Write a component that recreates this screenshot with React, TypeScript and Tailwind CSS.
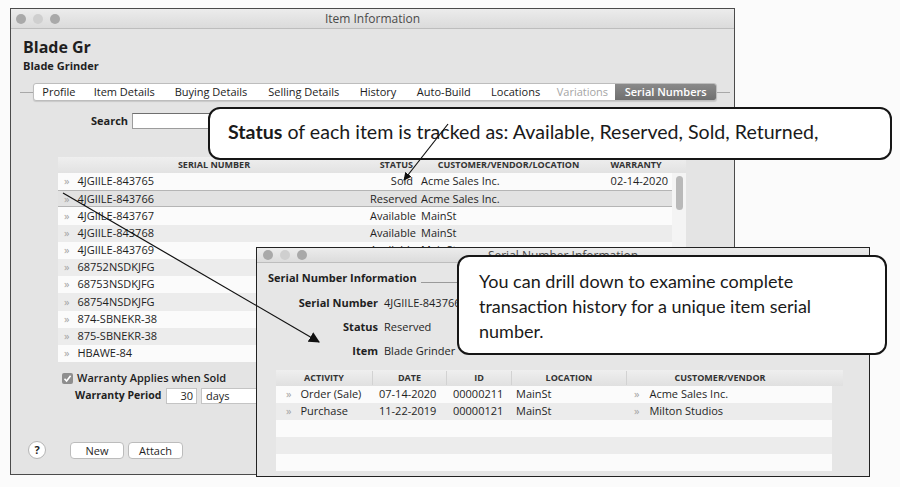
import React from "react";

// Item Information window with a Serial Number Information window on top, plus two callouts

const APP_FONT = "font-['Open_Sans','Liberation_Sans',sans-serif]";
const NOTE_FONT = "font-['Lato','Liberation_Sans',sans-serif]";

const TABS = [
  { label: "Profile", w: "w-[50px]" },
  { label: "Item Details", w: "w-[81px]" },
  { label: "Buying Details", w: "w-[93px]" },
  { label: "Selling Details", w: "w-[93px]" },
  { label: "History", w: "w-[56px]" },
  { label: "Auto-Build", w: "w-[76px]" },
  { label: "Locations", w: "w-[68px]" },
  { label: "Variations", w: "w-[66px]", disabled: true },
  { label: "Serial Numbers", w: "w-[101px]", active: true },
];

type SerialRow = { sn: string; status?: string; who?: string; warranty?: string; selected?: boolean };

const SERIALS: SerialRow[] = [
  { sn: "4JGIILE-843765", status: "Sold", who: "Acme Sales Inc.", warranty: "02-14-2020" },
  { sn: "4JGIILE-843766", status: "Reserved", who: "Acme Sales Inc.", selected: true },
  { sn: "4JGIILE-843767", status: "Available", who: "MainSt" },
  { sn: "4JGIILE-843768", status: "Available", who: "MainSt" },
  { sn: "4JGIILE-843769", status: "Available", who: "MainSt" },
  { sn: "68752NSDKJFG", status: "Available", who: "MainSt" },
  { sn: "68753NSDKJFG", status: "Available", who: "MainSt" },
  { sn: "68754NSDKJFG", status: "Available", who: "MainSt" },
  { sn: "874-SBNEKR-38", status: "Available", who: "MainSt" },
  { sn: "875-SBNEKR-38", status: "Available", who: "MainSt" },
  { sn: "HBAWE-84", status: "Available", who: "MainSt" },
];

const HISTORY = [
  { activity: "Order (Sale)", date: "07-14-2020", id: "00000211", location: "MainSt", who: "Acme Sales Inc." },
  { activity: "Purchase", date: "11-22-2019", id: "00000121", location: "MainSt", who: "Milton Studios" },
  null,
  null,
  null,
];

function Chevron() {
  return <span className="text-[#a3a3a3] text-[11px]">»</span>;
}

function Lights() {
  return (
    <div className="flex items-center gap-[7px]">
      <span className="w-[10px] h-[10px] rounded-full bg-[#a9a9a9]" />
      <span className="w-[10px] h-[10px] rounded-full bg-[#cfcfcf]" />
      <span className="w-[10px] h-[10px] rounded-full bg-[#a9a9a9]" />
    </div>
  );
}

function ItemWindow() {
  return (
    <div className={`absolute left-[10px] top-[8px] w-[725px] h-[467px] border border-[#4b4b4b] bg-[#e4e4e4] flex flex-col text-[#1f1f1f] ${APP_FONT}`}>
      {/* title bar */}
      <div className="h-[20px] shrink-0 flex items-center border-b border-[#bdbdbd] bg-gradient-to-b from-[#ececec] to-[#dbdbdb]">
        <div className="w-[70px] pl-[5px]">
          <Lights />
        </div>
        <div className="flex-1 text-center text-[12px] text-[#4a4a4a]">Item Information</div>
        <div className="w-[70px]" />
      </div>

      <div className="ml-[12px] mt-[8px] h-[20px] leading-[20px] text-[16px] font-bold">Blade Gr</div>
      <div className="ml-[12px] mt-[2px] h-[14px] leading-[14px] text-[11px] font-bold">Blade Grinder</div>

      {/* tabs */}
      <div className="mt-[10px] ml-[9px] h-[18px] flex items-center">
        <div className="w-[13px] h-px bg-[#a8a8a8]" />
        <div className="w-[684px] h-[18px] flex bg-white border border-[#bdbdbd] rounded-[3px] shadow-[0_1px_1px_rgba(0,0,0,0.12)] overflow-hidden">
          {TABS.map((t) => (
            <div
              key={t.label}
              className={`${t.w} h-full flex items-center justify-center text-[11px] ${
                t.active
                  ? "bg-gradient-to-b from-[#8a8a8a] to-[#6f6f6f] text-white font-semibold"
                  : t.disabled
                  ? "text-[#a5a5a5]"
                  : "text-[#1c1c1c]"
              }`}
            >
              {t.label}
            </div>
          ))}
        </div>
        <div className="w-[13px] h-px bg-[#a8a8a8]" />
      </div>

      {/* search */}
      <div className="mt-[12px] ml-[80px] h-[16px] flex items-center">
        <span className="w-[37px] text-[11px] font-bold">Search</span>
        <div className="ml-[4px] w-[170px] h-[16px] bg-white border border-[#9c9c9c] border-t-[#6f6f6f]" />
      </div>

      {/* serial table */}
      <div className="mt-[28px] ml-[47px] w-[628px]">
        <div className="h-[16px] grid grid-cols-[312px_47px_183px_72px_14px] items-center text-[9px] font-bold text-[#333] bg-gradient-to-b from-[#efefef] to-[#e2e2e2]">
          <span className="text-center">SERIAL NUMBER</span>
          <span className="text-right pr-[4px]">STATUS</span>
          <span className="text-center">CUSTOMER/VENDOR/LOCATION</span>
          <span className="text-center">WARRANTY</span>
          <span />
        </div>
        <div className="flex">
          <div className="w-[614px]">
            {SERIALS.map((r, i) => (
              <div
                key={r.sn}
                className={`h-[17.2px] grid grid-cols-[312px_47px_183px_72px] items-center text-[11px] ${
                  r.selected
                    ? "bg-[#e2e2e2] border-y border-[#b5b5b5]"
                    : i % 2 === 0
                    ? "bg-[#fbfbfb]"
                    : "bg-[#ececec]"
                }`}
              >
                <span className="flex items-center pl-[6px] gap-[8px]">
                  <Chevron />
                  <span>{r.sn}</span>
                </span>
                <span className="text-right pr-[4px] whitespace-nowrap">{r.status}</span>
                <span className="pl-[4px] whitespace-nowrap">{r.who}</span>
                <span className="text-right pr-[4px] whitespace-nowrap overflow-hidden">{r.warranty}</span>
              </div>
            ))}
          </div>
          <div className="w-[14px] bg-[#f4f4f4] pt-[3px] flex justify-center">
            <div className="w-[7px] h-[34px] rounded-full bg-[#b9b9b9]" />
          </div>
        </div>
      </div>

      {/* warranty */}
      <div className="mt-[9px] ml-[51px] h-[14px] flex items-center gap-[4px] text-[11px] font-semibold whitespace-nowrap">
        <span className="w-[11px] h-[11px] rounded-[2px] bg-[#8e8e8e] flex items-center justify-center">
          <svg width="9" height="9" viewBox="0 0 9 9">
            <path d="M1.5 4.8 L3.6 7 L7.6 1.8" fill="none" stroke="white" strokeWidth="1.6" />
          </svg>
        </span>
        <span>Warranty Applies when Sold</span>
      </div>
      <div className="mt-[3px] ml-[64px] h-[16px] flex items-center text-[11px]">
        <span className="w-[88px] font-bold text-[10.5px] whitespace-nowrap">Warranty Period</span>
        <div className="ml-[3px] w-[31px] h-[16px] bg-white border border-[#c4c4c4] text-right pr-[3px] leading-[14px]">30</div>
        <div className="ml-[4px] w-[80px] h-[16px] bg-white border border-[#c4c4c4] pl-[4px] leading-[14px]">days</div>
      </div>

      {/* buttons */}
      <div className="mt-[37px] ml-[17px] h-[18px] flex items-center text-[11px]">
        <span className="w-[18px] h-[18px] rounded-full bg-white border border-[#b5b5b5] flex items-center justify-center font-bold text-[11px]">?</span>
        <button className="ml-[24px] w-[54px] h-[17px] bg-white border border-[#bcbcbc] rounded-[4px]">New</button>
        <button className="ml-[4px] w-[55px] h-[17px] bg-white border border-[#bcbcbc] rounded-[4px]">Attach</button>
      </div>
    </div>
  );
}

function SerialWindow() {
  return (
    <div className={`absolute left-[256px] top-[247px] w-[614px] h-[230px] border border-[#222] bg-[#e6e6e6] flex flex-col text-[#1f1f1f] ${APP_FONT}`}>
      <div className="h-[15px] shrink-0 flex items-center border-b border-[#bdbdbd] bg-gradient-to-b from-[#ececec] to-[#dcdcdc]">
        <div className="w-[70px] pl-[6px]">
          <Lights />
        </div>
        <div className="flex-1 text-center text-[12px] text-[#4a4a4a] leading-[14px] pt-[2px]">Serial Number Information</div>
        <div className="w-[70px]" />
      </div>

      <div className="mt-[8px] ml-[11px] mr-[12px] h-[14px] flex items-end">
        <span className="text-[11px] font-bold leading-[14px]">Serial Number Information</span>
        <div className="flex-1 ml-[4px] mb-[2px] h-px bg-[#9a9a9a]" />
      </div>

      {[
        ["Serial Number", "4JGIILE-843766"],
        ["Status", "Reserved"],
        ["Item", "Blade Grinder"],
      ].map(([label, value], i) => (
        <div key={label} className={`${i === 0 ? "mt-[11px]" : "mt-[10px]"} h-[14px] flex items-center text-[11px]`}>
          <span className="w-[121px] text-right font-bold">{label}</span>
          <span className="ml-[6px]">{value}</span>
        </div>
      ))}

      <div className="mt-[12px] ml-[19px] w-[567px]">
        <div className="h-[16px] grid grid-cols-[97px_74px_65px_115px_186px_30px] items-center text-[9px] font-bold text-[#333] bg-gradient-to-b from-[#efefef] to-[#e0e0e0]">
          <span className="text-center border-r border-[#d2d2d2]">ACTIVITY</span>
          <span className="text-center border-r border-[#d2d2d2]">DATE</span>
          <span className="text-center border-r border-[#d2d2d2]">ID</span>
          <span className="text-center border-r border-[#d2d2d2]">LOCATION</span>
          <span className="text-center">CUSTOMER/VENDOR</span>
          <span />
        </div>
        <div className="w-[556px]">
          {HISTORY.map((r, i) => (
            <div
              key={i}
              className={`h-[17px] grid grid-cols-[97px_74px_65px_115px_205px] items-center text-[11px] ${
                i % 2 === 0 ? "bg-[#fbfbfb]" : "bg-[#ececec]"
              }`}
            >
              {r && (
                <>
                  <span className="flex items-center pl-[10px] gap-[9px] whitespace-nowrap">
                    <Chevron />
                    <span>{r.activity}</span>
                  </span>
                  <span className="pl-[6px]">{r.date}</span>
                  <span className="pl-[6px]">{r.id}</span>
                  <span className="pl-[4px]">{r.location}</span>
                  <span className="flex items-center pl-[7px] gap-[10px] whitespace-nowrap">
                    <Chevron />
                    <span>{r.who}</span>
                  </span>
                </>
              )}
            </div>
          ))}
        </div>
      </div>
    </div>
  );
}

export default function App() {
  return (
    <div className="relative w-[900px] h-[487px] overflow-hidden bg-[#fbfbfb]">
      <ItemWindow />
      <SerialWindow />

      {/* callouts */}
      <div className={`absolute left-[208px] top-[107px] w-[684px] h-[53px] rounded-[12px] border-2 border-[#161616] bg-white flex items-center pl-[18px] pb-[3px] text-[19.6px] text-[#1a1a1a] ${NOTE_FONT}`}>
        <span className="whitespace-nowrap">
          <b>Status</b> of each item is tracked as: Available, Reserved, Sold, Returned,
        </span>
      </div>
      <div className={`absolute left-[457px] top-[255px] w-[430px] h-[100px] rounded-[12px] border-2 border-[#161616] bg-white pl-[20px] pt-[12px] text-[18px] leading-[25px] text-[#1a1a1a] whitespace-nowrap ${NOTE_FONT}`}>
        You can drill down to examine complete
        <br />
        transaction history for a unique item serial
        <br />
        number.
      </div>

      {/* arrows */}
      <svg className="absolute inset-0 pointer-events-none" width="900" height="487">
        <defs>
          <marker id="head" viewBox="0 0 10 10" refX="9" refY="5" markerWidth="8" markerHeight="8" orient="auto" markerUnits="userSpaceOnUse">
            <path d="M0 0 L10 5 L0 10 z" fill="#111" />
          </marker>
          <marker id="head2" viewBox="0 0 10 10" refX="9" refY="5" markerWidth="11" markerHeight="11" orient="auto" markerUnits="userSpaceOnUse">
            <path d="M0 0 L10 5 L0 10 z" fill="#111" />
          </marker>
        </defs>
        <line x1="448" y1="124" x2="404" y2="180" stroke="#111" strokeWidth="1.2" markerEnd="url(#head)" />
        <line x1="63" y1="193" x2="319" y2="342" stroke="#111" strokeWidth="1.2" markerEnd="url(#head2)" />
      </svg>
    </div>
  );
}
